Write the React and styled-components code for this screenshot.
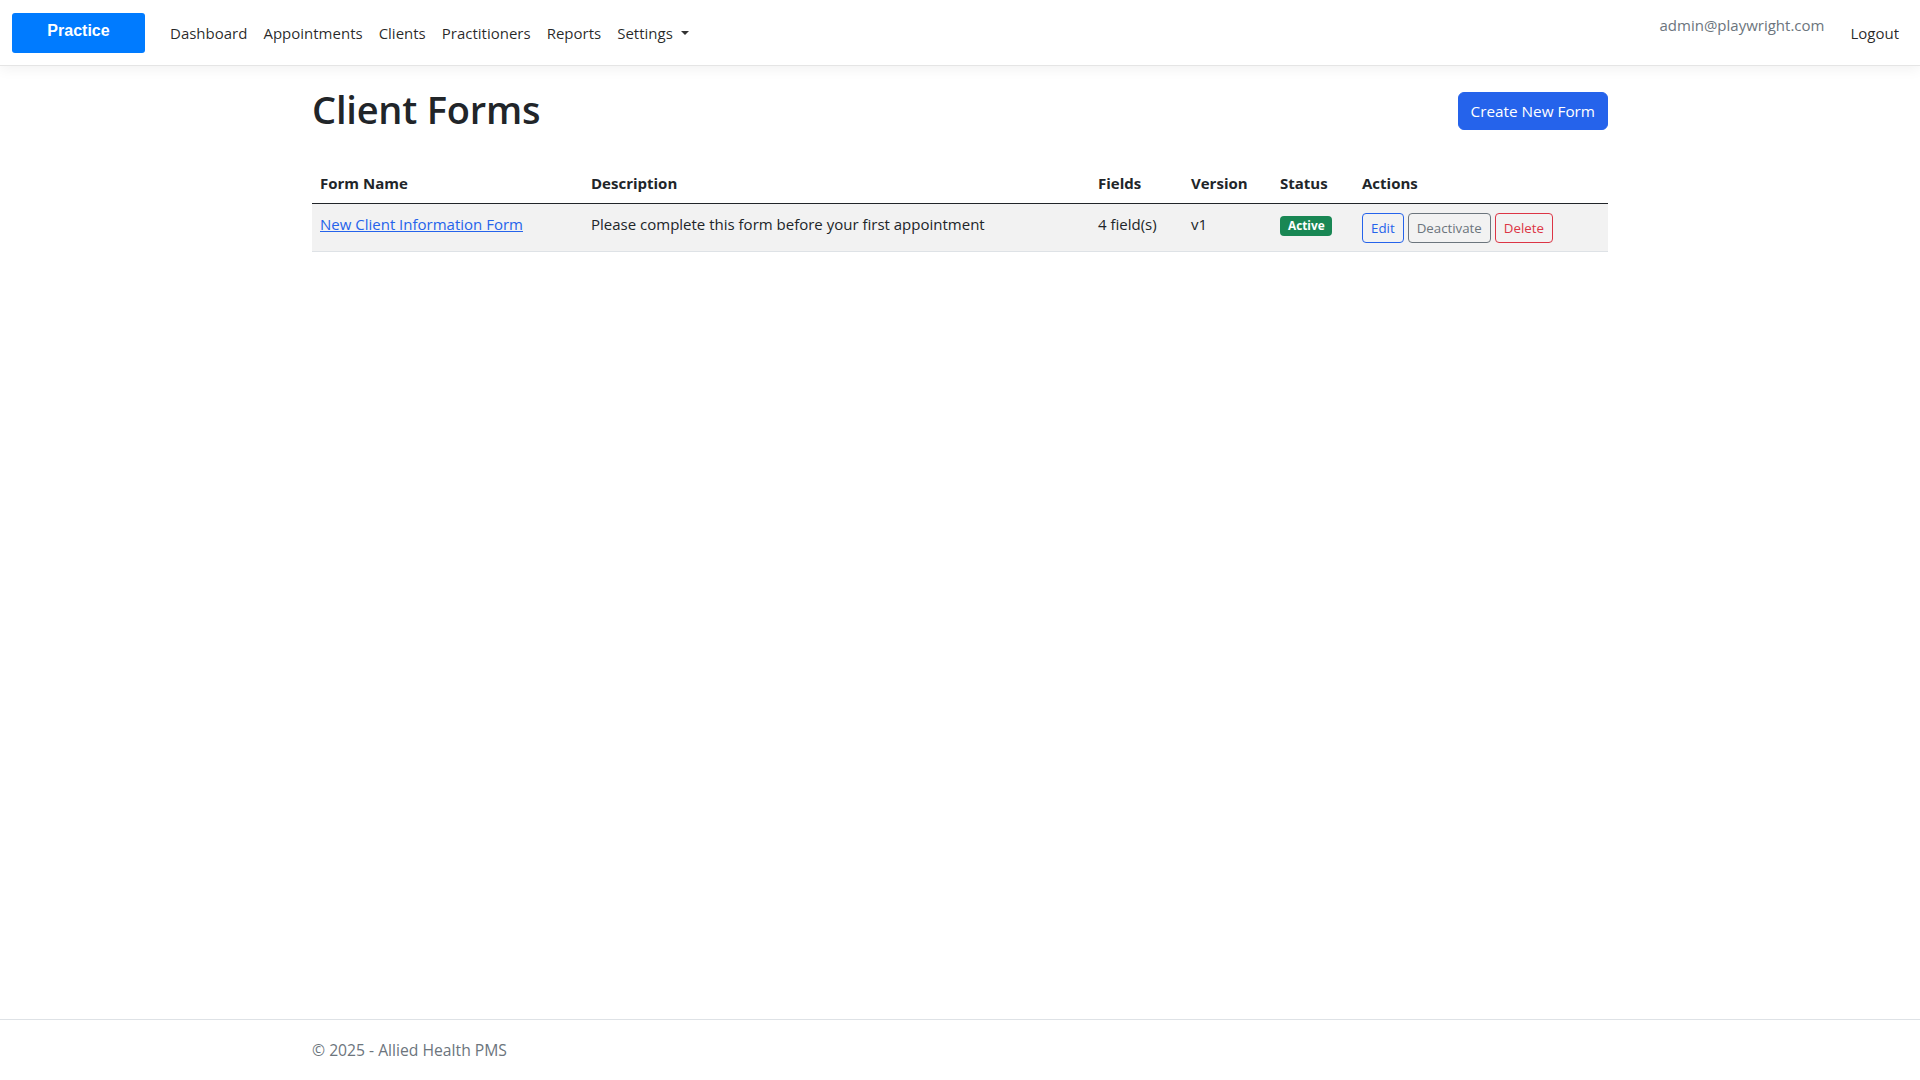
import styled, { createGlobalStyle } from "styled-components";

const GlobalStyle = createGlobalStyle`
  html, body {
    margin: 0;
    padding: 0;
  }
  body {
    font-family: "Open Sans", "Noto Sans", Arial, sans-serif;
    font-size: 15px;
    line-height: 24px;
    color: #212529;
    background: #fff;
  }
`;

const Page = styled.div`
  min-height: 100vh;
  display: flex;
  flex-direction: column;
`;

const NavBar = styled.nav`
  height: 65px;
  display: flex;
  align-items: center;
  padding: 0 12px;
  border-bottom: 1px solid #e5e5e5;
  box-shadow: 0 4px 12px rgba(0, 0, 0, 0.05);
  box-sizing: content-box;
`;

const Brand = styled.a`
  width: 133px;
  height: 40px;
  margin-right: 17px;
  background: #007bff;
  border-radius: 3px;
  color: #fff;
  font-family: "Liberation Sans", Arial, sans-serif;
  font-weight: 700;
  font-size: 16px;
  display: flex;
  align-items: center;
  justify-content: center;
  padding-bottom: 4px;
  box-sizing: border-box;
  text-decoration: none;
`;

const NavList = styled.div`
  display: flex;
  align-items: center;
  flex: 1;
`;

const NavLink = styled.a`
  padding: 8px 8px;
  color: rgba(0, 0, 0, 0.85);
  text-decoration: none;
  display: flex;
  align-items: center;
  gap: 8px;
  cursor: pointer;
`;

const Caret = styled.span`
  width: 0;
  height: 0;
  border-left: 4px solid transparent;
  border-right: 4px solid transparent;
  border-top: 4px solid #333;
  margin-top: 1px;
`;

const UserArea = styled.div`
  display: flex;
  align-items: flex-start;
  height: 65px;
`;

const UserEmail = styled.span`
  color: #6c757d;
  padding-top: 13px;
  margin-right: 18px;
`;

const Logout = styled(NavLink)`
  padding-top: 21px;
  padding-right: 9px;
`;

const Main = styled.main`
  width: 1296px;
  margin: 0 auto;
  padding-top: 19px;
  flex: 1;
`;

const HeaderRow = styled.div`
  display: flex;
  justify-content: space-between;
  align-items: center;
  margin-bottom: 30px;
`;

const Title = styled.h1`
  margin: 0;
  font-size: 38px;
  font-weight: 600;
  line-height: 48px;
  letter-spacing: -0.2px;
`;

const PrimaryButton = styled.button`
  height: 38px;
  padding: 0 12px;
  margin-top: 3px;
  background: #2563eb;
  color: #fff;
  border: 1px solid #2563eb;
  border-radius: 6px;
  font-family: inherit;
  font-size: 15.3px;
  cursor: pointer;
`;

const Table = styled.table`
  width: 100%;
  border-collapse: collapse;
  table-layout: fixed;
`;

const Th = styled.th`
  box-sizing: border-box;
  text-align: left;
  font-weight: 700;
  padding: 8px;
  width: ${(p) => p.$w}px;
  border-bottom: 1.5px solid #212529;
`;

const Tr = styled.tr`
  background: ${(p) => (p.$striped ? "#f2f2f2" : "#fff")};
  border-bottom: 1px solid #dee2e6;
`;

const Td = styled.td`
  padding: 8px;
  vertical-align: top;
  height: 31px;
`;

const FormLink = styled.a`
  color: #2563eb;
  text-decoration: underline;
  cursor: pointer;
`;

const Badge = styled.span`
  display: inline-block;
  background: #198754;
  color: #fff;
  font-weight: 700;
  font-size: 11.8px;
  line-height: 1;
  padding: 4px 7px 4px 8px;
  border-radius: 4px;
  margin-top: 3px;
`;

const Actions = styled.div`
  display: flex;
  gap: 4px;
  padding-top: 1px;
`;

const tones = {
  primary: "#2563eb",
  secondary: "#6c757d",
  danger: "#dc3545",
};

const OutlineButton = styled.button`
  height: 30px;
  padding: 0 8px;
  background: transparent;
  color: ${(p) => tones[p.$tone]};
  border: 1px solid ${(p) => tones[p.$tone]};
  border-radius: 4px;
  font-family: inherit;
  font-size: 13.3px;
  cursor: pointer;
`;

const Footer = styled.footer`
  border-top: 1px solid #dee2e6;
  line-height: 60px;
  font-size: 15.7px;
  color: #6c757d;
`;

const FooterInner = styled.div`
  width: 1296px;
  margin: 0 auto;
`;

const forms = [
  {
    name: "New Client Information Form",
    description: "Please complete this form before your first appointment",
    fields: 4,
    version: 1,
    active: true,
  },
];

const columns = [
  ["Form Name", 271],
  ["Description", 507],
  ["Fields", 93],
  ["Version", 89],
  ["Status", 82],
  ["Actions", 254],
];

export default function App() {
  return (
    <Page>
      <GlobalStyle />
      <NavBar>
        <Brand>Practice</Brand>
        <NavList>
          <NavLink>Dashboard</NavLink>
          <NavLink>Appointments</NavLink>
          <NavLink>Clients</NavLink>
          <NavLink>Practitioners</NavLink>
          <NavLink>Reports</NavLink>
          <NavLink>
            Settings <Caret />
          </NavLink>
        </NavList>
        <UserArea>
          <UserEmail>admin@playwright.com</UserEmail>
          <Logout>Logout</Logout>
        </UserArea>
      </NavBar>

      <Main>
        <HeaderRow>
          <Title>Client Forms</Title>
          <PrimaryButton>Create New Form</PrimaryButton>
        </HeaderRow>

        <Table>
          <thead>
            <tr>
              {columns.map(([label, w]) => (
                <Th key={label} $w={w}>
                  {label}
                </Th>
              ))}
            </tr>
          </thead>
          <tbody>
            {forms.map((f, i) => (
              <Tr key={f.name} $striped={i % 2 === 0}>
                <Td>
                  <FormLink>{f.name}</FormLink>
                </Td>
                <Td>{f.description}</Td>
                <Td>{f.fields} field(s)</Td>
                <Td>v{f.version}</Td>
                <Td>{f.active && <Badge>Active</Badge>}</Td>
                <Td>
                  <Actions>
                    <OutlineButton $tone="primary">Edit</OutlineButton>
                    <OutlineButton $tone="secondary">Deactivate</OutlineButton>
                    <OutlineButton $tone="danger">Delete</OutlineButton>
                  </Actions>
                </Td>
              </Tr>
            ))}
          </tbody>
        </Table>
      </Main>

      <Footer>
        <FooterInner>© 2025 - Allied Health PMS</FooterInner>
      </Footer>
    </Page>
  );
}
